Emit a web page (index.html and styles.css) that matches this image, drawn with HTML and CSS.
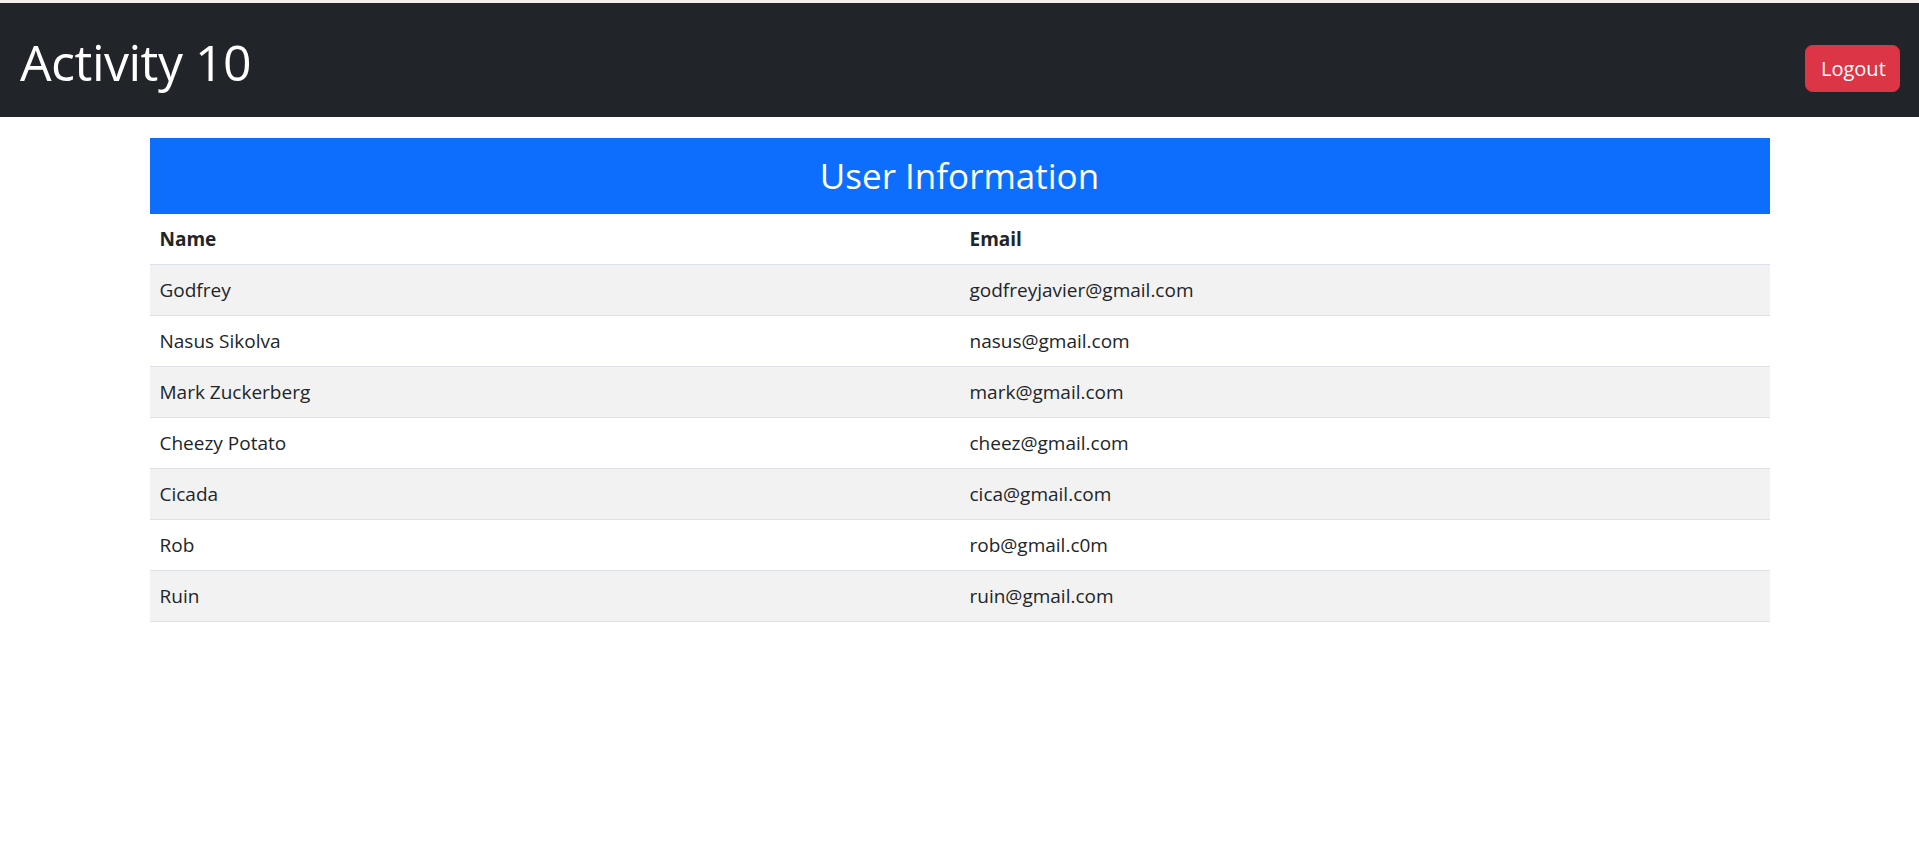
FILE: index.html
```html
<!DOCTYPE html>
<html lang="en">
<head>
<meta charset="utf-8">
<title>Activity 10</title>
<link rel="stylesheet" href="styles.css">
</head>
<body>
<header class="topbar">
  <h1 class="brand">Activity 10</h1>
  <button class="btn-logout" type="button">Logout</button>
</header>
<main class="container">
  <h2 class="banner">User Information</h2>
  <table class="users">
    <thead>
      <tr><th>Name</th><th>Email</th></tr>
    </thead>
    <tbody>
      <tr><td>Godfrey</td><td>godfreyjavier@gmail.com</td></tr>
      <tr><td>Nasus Sikolva</td><td>nasus@gmail.com</td></tr>
      <tr><td>Mark Zuckerberg</td><td>mark@gmail.com</td></tr>
      <tr><td>Cheezy Potato</td><td>cheez@gmail.com</td></tr>
      <tr><td>Cicada</td><td>cica@gmail.com</td></tr>
      <tr><td>Rob</td><td>rob@gmail.c0m</td></tr>
      <tr><td>Ruin</td><td>ruin@gmail.com</td></tr>
    </tbody>
  </table>
</main>
</body>
</html>
```

FILE: styles.css
```css
* { box-sizing: border-box; }
html, body { margin: 0; padding: 0; }
body {
  font-family: "Open Sans", "Noto Sans", sans-serif;
  color: #212529;
  background: #fff;
  font-size: 20px;
}
.topbar {
  border-top: 3px solid #f6eeee;
  background: #212529;
  height: 117px;
  display: flex;
  justify-content: space-between;
  align-items: flex-start;
  padding: 0 19px 0 20px;
}
.brand {
  margin: 0;
  margin-top: 29px;
  font-size: 50px;
  font-weight: 400;
  line-height: 60px;
  color: #fff;
  letter-spacing: -0.5px;
}
.btn-logout {
  margin-top: 42px;
  font-family: inherit;
  font-size: 20px;
  line-height: 30px;
  padding: 7.5px 15px;
  border: 1px solid #dc3545;
  background: #dc3545;
  color: #fff;
  border-radius: 7.5px;
  width: 95px;
  height: 47px;
}
.container {
  width: 1620px;
  margin: 21px auto 0;
}
.banner {
  margin: 0;
  background: #0d6efd;
  color: #fff;
  text-align: center;
  font-weight: 400;
  font-size: 35px;
  line-height: 48px;
  padding: 14px 0;
  height: 76px;
}
.users {
  width: 100%;
  border-collapse: collapse;
  table-layout: fixed;
}
.users th, .users td {
  text-align: left;
  padding: 10px;
  line-height: 30px;
  font-size: 19px;
  border-bottom: 1px solid #dee2e6;
  width: 50%;
}
.users th { font-weight: 700; height: 50px; }
.users td { height: 51px; }
.users tbody tr:nth-child(odd) td { background: #f2f2f2; }
```
